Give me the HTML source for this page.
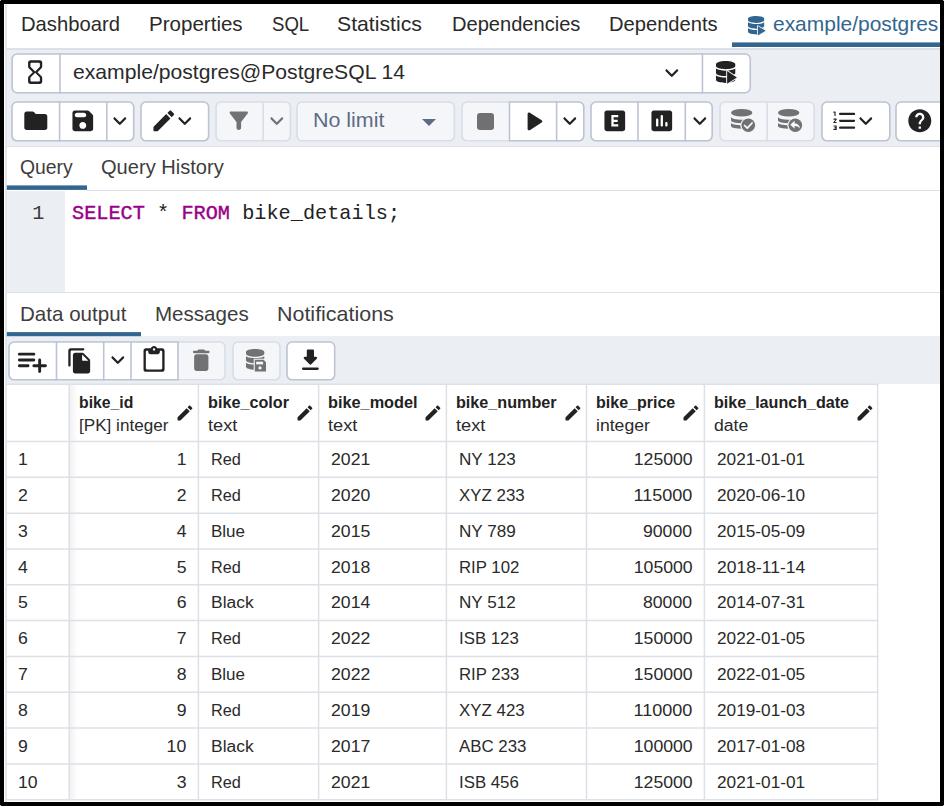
<!DOCTYPE html>
<html><head><meta charset="utf-8"><title>pgAdmin Query Tool</title>
<style>
*{box-sizing:border-box;margin:0;padding:0}
html,body{width:944px;height:806px;overflow:hidden;background:#000}
body{font-family:"Liberation Sans",sans-serif;color:#222;position:relative}
#app{position:absolute;left:4px;top:4px;width:936px;height:798px;background:#fff;overflow:hidden}
#app *{position:absolute}
.gray{background:#ebeef3}
.ln{background:#dde0e6}
.pri{background:#326690}
.tab{font-size:20.3px;line-height:24px;white-space:pre;color:#2a2a2a}
.btn{background:#fff;border:1.5px solid #c3cad8}
.btn.dis{background:#f4f6f9;border-color:#dbe0e8}
.dv{background:#c3cad8}
svg{overflow:visible}
.cell{font-size:17.3px;line-height:20px;white-space:pre;color:#2a2a2a}
.num{font-size:17.3px;line-height:20px;white-space:pre;color:#2a2a2a;text-align:right}
.hb{font-size:17px;font-weight:700;line-height:20px;white-space:pre;color:#222}
.ht{font-size:17.3px;line-height:20px;white-space:pre;color:#2a2a2a}
.code{font-family:"Liberation Mono",monospace;font-size:20.25px;line-height:24px;white-space:pre;color:#222}
.kw{position:static !important;color:#990088;-webkit-text-stroke:0.4px #990088}
.lnl{background:#e2e5ea}
.cd{position:absolute;width:1px;height:1px;background:#bbb}
</style></head><body>
<div class="cd" style="left:0;top:0"></div><div class="cd" style="right:0;top:0"></div><div class="cd" style="left:0;bottom:0"></div><div class="cd" style="right:0;bottom:0"></div>
<div id="app">
<div class="lnl" style="left:1.3px;top:0px;width:1.5px;height:798px;"></div>
<span class="tab" style="left:17px;top:8px;transform:scaleX(0.9974);transform-origin:0 0;">Dashboard</span>
<span class="tab" style="left:144.6px;top:8px;transform:scaleX(1.0131);transform-origin:0 0;">Properties</span>
<span class="tab" style="left:267.6px;top:8px;transform:scaleX(0.9157);transform-origin:0 0;">SQL</span>
<span class="tab" style="left:332.6px;top:8px;transform:scaleX(1.0467);transform-origin:0 0;">Statistics</span>
<span class="tab" style="left:448px;top:8px;transform:scaleX(0.9903);transform-origin:0 0;">Dependencies</span>
<span class="tab" style="left:604.8px;top:8px;transform:scaleX(0.9930);transform-origin:0 0;">Dependents</span>
<span class="tab" style="left:768.6px;top:8.3px;transform:scaleX(1.0329);transform-origin:0 0;color:#326690">example/postgres</span>
<div class="ln" style="left:2.8px;top:44px;width:933.2px;height:2px;"></div>
<div class="gray" style="left:2.8px;top:46px;width:933.2px;height:96px;"></div>
<div class="ln" style="left:2.8px;top:141.5px;width:933.2px;height:1.5px;"></div>
<svg style="left:5.85px;top:47.6px" width="742.35" height="42.7" viewBox="0 0 742.35 42.7"><path d="M7 2H49.85V40.7H7A5 5 0 0 1 2 35.7V7A5 5 0 0 1 7 2z" fill="#fff"/><path d="M49.85 2H692.55V40.7H49.85V2z" fill="#fff"/><path d="M692.55 2H735.35A5 5 0 0 1 740.35 7V35.7A5 5 0 0 1 735.35 40.7H692.55V2z" fill="#fff"/><path d="M7 2H50.65M50.65 40.7H7A5 5 0 0 1 2 35.7V7A5 5 0 0 1 7 2" fill="none" stroke="#bcc3d3" stroke-width="1.6"/><path d="M49.05 2H693.35M693.35 40.7H49.05" fill="none" stroke="#bcc3d3" stroke-width="1.6"/><path d="M691.75 2H735.35A5 5 0 0 1 740.35 7V35.7A5 5 0 0 1 735.35 40.7H691.75" fill="none" stroke="#bcc3d3" stroke-width="1.6"/><path d="M49.85 2.8V39.9" stroke="#bcc3d3" stroke-width="1.6" fill="none"/><path d="M692.55 2.8V39.9" stroke="#bcc3d3" stroke-width="1.6" fill="none"/></svg>
<svg style="left:17.34px;top:54.44px;opacity:1" width="28.32" height="28.32" viewBox="0 0 24 24"><path fill="#222" d="M8 2c-1.100 0-2 .9-2 2v3.170c0 .530.210 1.040.590 1.420L10 12l-3.420 3.420c-.370.380-.580.890-.580 1.420V20c0 1.100.9 2 2 2h8c1.100 0 2-.9 2-2v-3.160c0-.530-.210-1.040-.580-1.410L14 12l3.410-3.400c.380-.380.590-.890.590-1.420V4c0-1.100-.9-2-2-2H8zm8 14.500V19c0 .55-.45 1-1 1H9c-.55 0-1-.45-1-1v-2.500l4-4 4 4zm-4-5l-4-4V5c0-.55.45-1 1-1h6c.55 0 1 .45 1 1v2.500l-4 4z"/></svg>
<span class="tab" style="left:68.6px;top:56px;transform:scaleX(1.0064);transform-origin:0 0;font-size:21px">example/postgres@PostgreSQL 14</span>
<svg style="left:654.2px;top:54.7px;opacity:1" width="27.6" height="27.6" viewBox="0 0 24 24"><path fill="#222" d="M8.12 9.29 12 13.17l3.88-3.88c.39-.39 1.02-.39 1.41 0 .39.39.39 1.02 0 1.41l-4.59 4.59c-.39.39-1.02.39-1.41 0L6.7 10.7c-.39-.39-.39-1.02 0-1.41.39-.38 1.03-.39 1.42 0z"/></svg>
<svg style="left:6px;top:96.1px" width="125.7" height="42.8" viewBox="0 0 125.7 42.8"><path d="M7 2H49.6V40.8H7A5 5 0 0 1 2 35.8V7A5 5 0 0 1 7 2z" fill="#fff"/><path d="M49.6 2H96.8V40.8H49.6V2z" fill="#fff"/><path d="M96.8 2H118.7A5 5 0 0 1 123.7 7V35.8A5 5 0 0 1 118.7 40.8H96.8V2z" fill="#fff"/><path d="M7 2H50.4M50.4 40.8H7A5 5 0 0 1 2 35.8V7A5 5 0 0 1 7 2" fill="none" stroke="#bcc3d3" stroke-width="1.6"/><path d="M48.8 2H97.6M97.6 40.8H48.8" fill="none" stroke="#bcc3d3" stroke-width="1.6"/><path d="M96 2H118.7A5 5 0 0 1 123.7 7V35.8A5 5 0 0 1 118.7 40.8H96" fill="none" stroke="#bcc3d3" stroke-width="1.6"/><path d="M49.6 2.8V40" stroke="#bcc3d3" stroke-width="1.6" fill="none"/><path d="M96.8 2.8V40" stroke="#bcc3d3" stroke-width="1.6" fill="none"/></svg>
<svg style="left:17.7px;top:102.8px;opacity:1" width="27.6" height="27.6" viewBox="0 0 24 24"><path fill="#222" d="M10.59 4.59C10.21 4.21 9.7 4 9.17 4H4c-1.1 0-1.99.9-1.99 2L2 18c0 1.1.9 2 2 2h16c1.1 0 2-.9 2-2V8c0-1.1-.9-2-2-2h-8l-1.41-1.41z"/></svg>
<svg style="left:65.2px;top:103px;opacity:1" width="27.6" height="27.6" viewBox="0 0 24 24"><path fill="#222" d="M17.59 3.59c-.38-.38-.89-.59-1.42-.59H5c-1.11 0-2 .9-2 2v14c0 1.1.9 2 2 2h14c1.1 0 2-.9 2-2V7.83c0-.53-.21-1.04-.59-1.41l-2.82-2.83zM12 19c-1.66 0-3-1.34-3-3s1.34-3 3-3 3 1.34 3 3-1.34 3-3 3zm1-10H7c-1.1 0-2-.9-2-2s.9-2 2-2h6c1.1 0 2 .9 2 2s-.9 2-2 2z"/></svg>
<svg style="left:102.4px;top:102.68px;opacity:1" width="27.6" height="27.6" viewBox="0 0 24 24"><path fill="#222" d="M8.12 9.29 12 13.17l3.88-3.88c.39-.39 1.02-.39 1.41 0 .39.39.39 1.02 0 1.41l-4.59 4.59c-.39.39-1.02.39-1.41 0L6.7 10.7c-.39-.39-.39-1.02 0-1.41.39-.38 1.03-.39 1.42 0z"/></svg>
<svg style="left:134.8px;top:96.1px" width="71.6" height="42.8" viewBox="0 0 71.6 42.8"><path d="M7 2H64.6A5 5 0 0 1 69.6 7V35.8A5 5 0 0 1 64.6 40.8H7A5 5 0 0 1 2 35.8V7A5 5 0 0 1 7 2z" fill="#fff"/><path d="M7 2H64.6A5 5 0 0 1 69.6 7V35.8A5 5 0 0 1 64.6 40.8H7A5 5 0 0 1 2 35.8V7A5 5 0 0 1 7 2" fill="none" stroke="#bcc3d3" stroke-width="1.6"/></svg>
<svg style="left:146.4px;top:103.1px;opacity:1" width="27.6" height="27.6" viewBox="0 0 24 24"><path fill="#222" d="M3 17.46v3.04c0 .28.22.5.5.5h3.04c.13 0 .26-.05.35-.15L17.81 9.94l-3.75-3.75L3.15 17.1c-.1.1-.15.22-.15.36zM20.71 7.04c.39-.39.39-1.02 0-1.41l-2.34-2.34c-.39-.39-1.02-.39-1.41 0l-1.83 1.83 3.75 3.75 1.83-1.83z"/></svg>
<svg style="left:167px;top:102.68px;opacity:1" width="27.6" height="27.6" viewBox="0 0 24 24"><path fill="#222" d="M8.12 9.29 12 13.17l3.88-3.88c.39-.39 1.02-.39 1.41 0 .39.39.39 1.02 0 1.41l-4.59 4.59c-.39.39-1.02.39-1.41 0L6.7 10.7c-.39-.39-.39-1.02 0-1.41.39-.38 1.03-.39 1.42 0z"/></svg>
<svg style="left:209.5px;top:96.1px" width="78.4" height="42.8" viewBox="0 0 78.4 42.8"><path d="M7 2H49.1V40.8H7A5 5 0 0 1 2 35.8V7A5 5 0 0 1 7 2z" fill="#f5f6f9"/><path d="M49.1 2H71.4A5 5 0 0 1 76.4 7V35.8A5 5 0 0 1 71.4 40.8H49.1V2z" fill="#f5f6f9"/><path d="M7 2H49.9M49.9 40.8H7A5 5 0 0 1 2 35.8V7A5 5 0 0 1 7 2" fill="none" stroke="#d9dde7" stroke-width="1.6"/><path d="M48.3 2H71.4A5 5 0 0 1 76.4 7V35.8A5 5 0 0 1 71.4 40.8H48.3" fill="none" stroke="#d9dde7" stroke-width="1.6"/><path d="M49.1 2.8V40" stroke="#d9dde7" stroke-width="1.6" fill="none"/></svg>
<svg style="left:221.4px;top:102.6px;opacity:0.62" width="27.6" height="27.6" viewBox="0 0 24 24"><path fill="#222" d="M4.25 5.61C6.57 8.59 10 13 10 13v5c0 1.1.9 2 2 2s2-.9 2-2v-5s3.43-4.41 5.75-7.39c.51-.66.04-1.61-.8-1.61H5.04c-.83 0-1.3.95-.79 1.61z"/></svg>
<svg style="left:258.6px;top:102.68px;opacity:0.62" width="27.6" height="27.6" viewBox="0 0 24 24"><path fill="#222" d="M8.12 9.29 12 13.17l3.88-3.88c.39-.39 1.02-.39 1.41 0 .39.39.39 1.02 0 1.41l-4.59 4.59c-.39.39-1.02.39-1.41 0L6.7 10.7c-.39-.39-.39-1.02 0-1.41.39-.38 1.03-.39 1.42 0z"/></svg>
<svg style="left:291.3px;top:96.1px" width="161.3" height="42.8" viewBox="0 0 161.3 42.8"><path d="M7 2H154.3A5 5 0 0 1 159.3 7V35.8A5 5 0 0 1 154.3 40.8H7A5 5 0 0 1 2 35.8V7A5 5 0 0 1 7 2z" fill="#f5f6f9"/><path d="M7 2H154.3A5 5 0 0 1 159.3 7V35.8A5 5 0 0 1 154.3 40.8H7A5 5 0 0 1 2 35.8V7A5 5 0 0 1 7 2" fill="none" stroke="#d9dde7" stroke-width="1.6"/></svg>
<span class="tab" style="left:309.4px;top:104.2px;transform:scaleX(1.0566);transform-origin:0 0;color:#5e6b85">No limit</span>
<svg style="left:418px;top:114.5px" width="14" height="7" viewBox="0 0 14 7"><path d="M0 0h14l-7 7z" fill="#5e6b85"/></svg>
<svg style="left:456.2px;top:96.1px" width="125.8" height="42.8" viewBox="0 0 125.8 42.8"><path d="M7 2H49.5V40.8H7A5 5 0 0 1 2 35.8V7A5 5 0 0 1 7 2z" fill="#f5f6f9"/><path d="M49.5 2H96.6V40.8H49.5V2z" fill="#fff"/><path d="M96.6 2H118.8A5 5 0 0 1 123.8 7V35.8A5 5 0 0 1 118.8 40.8H96.6V2z" fill="#fff"/><path d="M7 2H50.3M50.3 40.8H7A5 5 0 0 1 2 35.8V7A5 5 0 0 1 7 2" fill="none" stroke="#d9dde7" stroke-width="1.6"/><path d="M48.7 2H97.4M97.4 40.8H48.7" fill="none" stroke="#bcc3d3" stroke-width="1.6"/><path d="M95.8 2H118.8A5 5 0 0 1 123.8 7V35.8A5 5 0 0 1 118.8 40.8H95.8" fill="none" stroke="#bcc3d3" stroke-width="1.6"/><path d="M49.5 2.8V40" stroke="#bcc3d3" stroke-width="1.6" fill="none"/><path d="M96.6 2.8V40" stroke="#bcc3d3" stroke-width="1.6" fill="none"/></svg>
<div class="" style="left:473px;top:108.8px;width:17.2px;height:17.2px;background:#707072;border-radius:3px"></div>
<svg style="left:511.58px;top:100px;opacity:1" width="34.8" height="34.8" viewBox="0 0 24 24"><path fill="#222" d="M8 6.82v10.36c0 .79.87 1.27 1.54.84l8.14-5.18c.62-.39.62-1.29 0-1.69L9.54 5.98C8.87 5.55 8 6.03 8 6.82z"/></svg>
<svg style="left:552.4px;top:102.68px;opacity:1" width="27.6" height="27.6" viewBox="0 0 24 24"><path fill="#222" d="M8.12 9.29 12 13.17l3.88-3.88c.39-.39 1.02-.39 1.41 0 .39.39.39 1.02 0 1.41l-4.59 4.59c-.39.39-1.02.39-1.41 0L6.7 10.7c-.39-.39-.39-1.02 0-1.41.39-.38 1.03-.39 1.42 0z"/></svg>
<svg style="left:585.3px;top:96.1px" width="125.2" height="42.8" viewBox="0 0 125.2 42.8"><path d="M7 2H49V40.8H7A5 5 0 0 1 2 35.8V7A5 5 0 0 1 7 2z" fill="#fff"/><path d="M49 2H96.3V40.8H49V2z" fill="#fff"/><path d="M96.3 2H118.2A5 5 0 0 1 123.2 7V35.8A5 5 0 0 1 118.2 40.8H96.3V2z" fill="#fff"/><path d="M7 2H49.8M49.8 40.8H7A5 5 0 0 1 2 35.8V7A5 5 0 0 1 7 2" fill="none" stroke="#bcc3d3" stroke-width="1.6"/><path d="M48.2 2H97.1M97.1 40.8H48.2" fill="none" stroke="#bcc3d3" stroke-width="1.6"/><path d="M95.5 2H118.2A5 5 0 0 1 123.2 7V35.8A5 5 0 0 1 118.2 40.8H95.5" fill="none" stroke="#bcc3d3" stroke-width="1.6"/><path d="M49 2.8V40" stroke="#bcc3d3" stroke-width="1.6" fill="none"/><path d="M96.3 2.8V40" stroke="#bcc3d3" stroke-width="1.6" fill="none"/></svg>
<svg style="left:596.8px;top:103.4px;opacity:1" width="27.6" height="27.6" viewBox="0 0 24 24"><path fill="#222" d="M19 3H5c-1.1 0-2 .9-2 2v14c0 1.1.9 2 2 2h14c1.1 0 2-.9 2-2V5c0-1.1-.9-2-2-2zM15 9h-4v2h3.500v2H11v2h4v2H9V7h6v2z"/></svg>
<svg style="left:644.2px;top:103.4px;opacity:1" width="27.6" height="27.6" viewBox="0 0 24 24"><path fill="#222" d="M19 3H5c-1.1 0-2 .9-2 2v14c0 1.1.9 2 2 2h14c1.1 0 2-.9 2-2V5c0-1.1-.9-2-2-2zM8 17c-.55 0-1-.45-1-1v-5c0-.55.45-1 1-1s1 .45 1 1v5c0 .55-.45 1-1 1zm4 0c-.55 0-1-.45-1-1V8c0-.55.45-1 1-1s1 .45 1 1v8c0 .55-.45 1-1 1zm4 0c-.55 0-1-.45-1-1v-2c0-.55.45-1 1-1s1 .45 1 1v2c0 .55-.45 1-1 1z"/></svg>
<svg style="left:681.7px;top:102.68px;opacity:1" width="27.6" height="27.6" viewBox="0 0 24 24"><path fill="#222" d="M8.12 9.29 12 13.17l3.88-3.88c.39-.39 1.02-.39 1.41 0 .39.39.39 1.02 0 1.41l-4.59 4.59c-.39.39-1.02.39-1.41 0L6.7 10.7c-.39-.39-.39-1.02 0-1.41.39-.38 1.03-.39 1.42 0z"/></svg>
<svg style="left:714.2px;top:96.1px" width="98.2" height="42.8" viewBox="0 0 98.2 42.8"><path d="M7 2H49.1V40.8H7A5 5 0 0 1 2 35.8V7A5 5 0 0 1 7 2z" fill="#f5f6f9"/><path d="M49.1 2H91.2A5 5 0 0 1 96.2 7V35.8A5 5 0 0 1 91.2 40.8H49.1V2z" fill="#f5f6f9"/><path d="M7 2H49.9M49.9 40.8H7A5 5 0 0 1 2 35.8V7A5 5 0 0 1 7 2" fill="none" stroke="#d9dde7" stroke-width="1.6"/><path d="M48.3 2H91.2A5 5 0 0 1 96.2 7V35.8A5 5 0 0 1 91.2 40.8H48.3" fill="none" stroke="#d9dde7" stroke-width="1.6"/><path d="M49.1 2.8V40" stroke="#d9dde7" stroke-width="1.6" fill="none"/></svg>
<svg style="left:815.5px;top:96.1px" width="71.8" height="42.8" viewBox="0 0 71.8 42.8"><path d="M7 2H64.8A5 5 0 0 1 69.8 7V35.8A5 5 0 0 1 64.8 40.8H7A5 5 0 0 1 2 35.8V7A5 5 0 0 1 7 2z" fill="#fff"/><path d="M7 2H64.8A5 5 0 0 1 69.8 7V35.8A5 5 0 0 1 64.8 40.8H7A5 5 0 0 1 2 35.8V7A5 5 0 0 1 7 2" fill="none" stroke="#bcc3d3" stroke-width="1.6"/></svg>
<svg style="left:827.48px;top:102.8px;opacity:1" width="27.6" height="27.6" viewBox="0 0 24 24"><path fill="#222" d="M8 7h12c.55 0 1-.45 1-1s-.45-1-1-1H8c-.55 0-1 .45-1 1s.45 1 1 1zm12 10H8c-.55 0-1 .45-1 1s.45 1 1 1h12c.55 0 1-.45 1-1s-.45-1-1-1zm0-6H8c-.55 0-1 .45-1 1s.45 1 1 1h12c.55 0 1-.45 1-1s-.45-1-1-1zM4.500 16h-2c-.28 0-.5.22-.5.5s.22.5.5.5H4v.5h-.5c-.28 0-.5.22-.5.5s.22.5.5.5H4v.5H2.500c-.28 0-.5.22-.5.5s.22.5.5.5h2c.28 0 .5-.22.5-.5v-3c0-.28-.22-.5-.5-.5zm-2-11H3v2.500c0 .28.22.5.5.5s.5-.22.5-.5v-3c0-.28-.22-.5-.5-.5h-1c-.28 0-.5.22-.5.5s.22.5.5.5zm2 5h-2c-.28 0-.5.22-.5.5s.22.5.5.5h1.300l-1.680 1.960c-.08.09-.12.21-.12.32v.22c0 .28.22.5.5.5h2c.28 0 .5-.22.5-.5s-.22-.5-.5-.5H3.200l1.680-1.960c.08-.09.12-.21.12-.32v-.22c0-.28-.22-.5-.5-.5z"/></svg>
<svg style="left:848.1px;top:102.68px;opacity:1" width="27.6" height="27.6" viewBox="0 0 24 24"><path fill="#222" d="M8.12 9.29 12 13.17l3.88-3.88c.39-.39 1.02-.39 1.41 0 .39.39.39 1.02 0 1.41l-4.59 4.59c-.39.39-1.02.39-1.41 0L6.7 10.7c-.39-.39-.39-1.02 0-1.41.39-.38 1.03-.39 1.42 0z"/></svg>
<svg style="left:890.4px;top:96.1px" width="57.6" height="42.8" viewBox="0 0 57.6 42.8"><path d="M7 2H50.6A5 5 0 0 1 55.6 7V35.8A5 5 0 0 1 50.6 40.8H7A5 5 0 0 1 2 35.8V7A5 5 0 0 1 7 2z" fill="#fff"/><path d="M7 2H50.6A5 5 0 0 1 55.6 7V35.8A5 5 0 0 1 50.6 40.8H7A5 5 0 0 1 2 35.8V7A5 5 0 0 1 7 2" fill="none" stroke="#bcc3d3" stroke-width="1.6"/></svg>
<svg style="left:902.2px;top:102.7px;opacity:1" width="27.6" height="27.6" viewBox="0 0 24 24"><path fill="#222" d="M12 2C6.480 2 2 6.480 2 12s4.480 10 10 10 10-4.480 10-10S17.520 2 12 2zm1 17h-2v-2h2v2zm2.070-7.750l-.9.920C13.450 12.900 13 13.500 13 15h-2v-.5c0-1.100.450-2.100 1.170-2.830l1.240-1.260c.370-.360.590-.860.590-1.410 0-1.100-.9-2-2-2s-2 .9-2 2H8c0-2.210 1.790-4 4-4s4 1.790 4 4c0 .880-.360 1.680-.930 2.250z"/></svg>
<span class="tab" style="left:15.8px;top:151.3px;transform:scaleX(0.9545);transform-origin:0 0;color:#3d3d3d">Query</span>
<span class="tab" style="left:97.2px;top:151.3px;transform:scaleX(0.9901);transform-origin:0 0;color:#3d3d3d">Query History</span>
<div class="ln" style="left:83px;top:185.6px;width:853px;height:1.4px;"></div>
<div class="gray" style="left:2.8px;top:187px;width:58.5px;height:100.6px;"></div>
<span class="code" style="left:28.2px;top:198.1px;color:#3a3a3a">1</span>
<span class="code" style="left:68px;top:198.1px"><span class="kw">SELECT</span> * <span class="kw">FROM</span> bike_details;</span>
<div class="ln" style="left:2.8px;top:287.6px;width:933.2px;height:1.5px;"></div>
<span class="tab" style="left:15.6px;top:297.8px;transform:scaleX(1.0141);transform-origin:0 0;color:#3d3d3d">Data output</span>
<span class="tab" style="left:150.8px;top:297.8px;transform:scaleX(1.0133);transform-origin:0 0;color:#3d3d3d">Messages</span>
<span class="tab" style="left:273.4px;top:297.8px;transform:scaleX(1.0573);transform-origin:0 0;color:#3d3d3d">Notifications</span>
<div class="gray" style="left:2.8px;top:332.2px;width:933.2px;height:47.8px;"></div>
<svg style="left:3px;top:336px" width="220" height="41.8" viewBox="0 0 220 41.8"><path d="M7 2H49.5V39.8H7A5 5 0 0 1 2 34.8V7A5 5 0 0 1 7 2z" fill="#fff"/><path d="M49.5 2H96.7V39.8H49.5V2z" fill="#fff"/><path d="M96.7 2H124V39.8H96.7V2z" fill="#fff"/><path d="M124 2H171V39.8H124V2z" fill="#fff"/><path d="M171 2H213A5 5 0 0 1 218 7V34.8A5 5 0 0 1 213 39.8H171V2z" fill="#f5f6f9"/><path d="M170.2 2H213A5 5 0 0 1 218 7V34.8A5 5 0 0 1 213 39.8H170.2" fill="none" stroke="#d9dde7" stroke-width="1.6"/><path d="M7 2H50.3M50.3 39.8H7A5 5 0 0 1 2 34.8V7A5 5 0 0 1 7 2" fill="none" stroke="#bcc3d3" stroke-width="1.6"/><path d="M48.7 2H97.5M97.5 39.8H48.7" fill="none" stroke="#bcc3d3" stroke-width="1.6"/><path d="M95.9 2H124.8M124.8 39.8H95.9" fill="none" stroke="#bcc3d3" stroke-width="1.6"/><path d="M123.2 2H171.8M171.8 39.8H123.2" fill="none" stroke="#bcc3d3" stroke-width="1.6"/><path d="M49.5 2.8V39" stroke="#bcc3d3" stroke-width="1.6" fill="none"/><path d="M96.7 2.8V39" stroke="#bcc3d3" stroke-width="1.6" fill="none"/><path d="M124 2.8V39" stroke="#bcc3d3" stroke-width="1.6" fill="none"/><path d="M171 2.8V39" stroke="#bcc3d3" stroke-width="1.6" fill="none"/></svg>
<svg style="left:11.2px;top:339.5px;opacity:1" width="34.8" height="34.8" viewBox="0 0 24 24"><path fill="#222" d="M13 10H3c-.55 0-1 .45-1 1s.45 1 1 1h10c.55 0 1-.45 1-1s-.45-1-1-1zm0-4H3c-.55 0-1 .45-1 1s.45 1 1 1h10c.55 0 1-.45 1-1s-.45-1-1-1zm5 8v-3c0-.55-.45-1-1-1s-1 .45-1 1v3h-3c-.55 0-1 .45-1 1s.45 1 1 1h3v3c0 .55.45 1 1 1s1-.45 1-1v-3h3c.55 0 1-.45 1-1s-.45-1-1-1h-3zM3 16h6c.55 0 1-.45 1-1s-.45-1-1-1H3c-.55 0-1 .45-1 1s.45 1 1 1z"/></svg>
<svg style="left:62.2px;top:342.9px;opacity:1" width="27.6" height="27.6" viewBox="0 0 24 24"><path fill="#222" d="M15 1H4c-1.100 0-2 .9-2 2v13c0 .55.45 1 1 1s1-.45 1-1V4c0-.55.45-1 1-1h10c.55 0 1-.45 1-1s-.45-1-1-1zm.590 4.590l4.830 4.830c.370.370.580.880.580 1.410V21c0 1.100-.9 2-2 2H7.990C6.890 23 6 22.100 6 21l.01-14c0-1.100.89-2 1.990-2h6.170c.530 0 1.040.210 1.420.590zM15 12h4.500L14 6.500V11c0 .55.45 1 1 1z"/></svg>
<svg style="left:99.5px;top:342.48px;opacity:1" width="27.6" height="27.6" viewBox="0 0 24 24"><path fill="#222" d="M8.12 9.29 12 13.17l3.88-3.88c.39-.39 1.02-.39 1.41 0 .39.39.39 1.02 0 1.41l-4.59 4.59c-.39.39-1.02.39-1.41 0L6.7 10.7c-.39-.39-.39-1.02 0-1.41.39-.38 1.03-.39 1.42 0z"/></svg>
<svg style="left:136.3px;top:342.4px;opacity:1" width="28.08" height="28.08" viewBox="0 0 24 24"><path fill="#222" d="M19 2h-4.180C14.400.840 13.300 0 12 0S9.600.840 9.180 2H5c-1.100 0-2 .9-2 2v16c0 1.100.9 2 2 2h14c1.100 0 2-.9 2-2V4c0-1.100-.9-2-2-2zm-7 0c.55 0 1 .45 1 1s-.45 1-1 1-1-.45-1-1 .45-1 1-1zm6 18H6c-.55 0-1-.45-1-1V5c0-.55.45-1 1-1h1v1c0 1.100.9 2 2 2h6c1.100 0 2-.9 2-2V4h1c.55 0 1 .45 1 1v14c0 .55-.45 1-1 1z"/></svg>
<svg style="left:183.3px;top:341.7px;opacity:0.62" width="28.56" height="28.56" viewBox="0 0 24 24"><path fill="#222" d="M6 19c0 1.100.9 2 2 2h8c1.100 0 2-.9 2-2V9c0-1.100-.9-2-2-2H8c-1.100 0-2 .9-2 2v10zM18 4h-2.500l-.710-.710c-.180-.180-.440-.290-.7-.290H9.910c-.260 0-.520.110-.7.290L8.500 4H6c-.55 0-1 .45-1 1s.45 1 1 1h12c.55 0 1-.45 1-1s-.45-1-1-1z"/></svg>
<svg style="left:226.6px;top:336px" width="51" height="41.8" viewBox="0 0 51 41.8"><path d="M7 2H44A5 5 0 0 1 49 7V34.8A5 5 0 0 1 44 39.8H7A5 5 0 0 1 2 34.8V7A5 5 0 0 1 7 2z" fill="#f5f6f9"/><path d="M7 2H44A5 5 0 0 1 49 7V34.8A5 5 0 0 1 44 39.8H7A5 5 0 0 1 2 34.8V7A5 5 0 0 1 7 2" fill="none" stroke="#d9dde7" stroke-width="1.6"/></svg>
<svg style="left:280.7px;top:336px" width="51.7" height="41.8" viewBox="0 0 51.7 41.8"><path d="M7 2H44.7A5 5 0 0 1 49.7 7V34.8A5 5 0 0 1 44.7 39.8H7A5 5 0 0 1 2 34.8V7A5 5 0 0 1 7 2z" fill="#fff"/><path d="M7 2H44.7A5 5 0 0 1 49.7 7V34.8A5 5 0 0 1 44.7 39.8H7A5 5 0 0 1 2 34.8V7A5 5 0 0 1 7 2" fill="none" stroke="#bcc3d3" stroke-width="1.6"/></svg>
<svg style="left:292.3px;top:342.2px;opacity:1" width="28.8" height="28.8" viewBox="0 0 24 24"><path fill="#222" d="M16.590 9H15V4c0-.55-.45-1-1-1h-4c-.55 0-1 .45-1 1v5H7.410c-.890 0-1.340 1.080-.710 1.710l4.590 4.590c.390.390 1.020.390 1.410 0l4.590-4.590c.630-.630.190-1.710-.7-1.710zM5 19c0 .55.45 1 1 1h12c.55 0 1-.45 1-1s-.45-1-1-1H6c-.55 0-1 .45-1 1z"/></svg>
<div class="" style="left:66px;top:380.5px;width:8px;height:415px;background:linear-gradient(90deg,rgba(0,0,20,0.05),rgba(0,0,20,0))"></div>
<svg style="left:0;top:0" width="936" height="798" viewBox="0 0 936 798"><path d="M2.8 380.3H874.35" stroke="#dde0e6" stroke-width="1.5"/><path d="M2.8 437.5H874.35" stroke="#dde0e6" stroke-width="1.5"/><path d="M2.8 473.32H874.35" stroke="#dde0e6" stroke-width="1.5"/><path d="M2.8 509.14H874.35" stroke="#dde0e6" stroke-width="1.5"/><path d="M2.8 544.96H874.35" stroke="#dde0e6" stroke-width="1.5"/><path d="M2.8 580.78H874.35" stroke="#dde0e6" stroke-width="1.5"/><path d="M2.8 616.6H874.35" stroke="#dde0e6" stroke-width="1.5"/><path d="M2.8 652.42H874.35" stroke="#dde0e6" stroke-width="1.5"/><path d="M2.8 688.24H874.35" stroke="#dde0e6" stroke-width="1.5"/><path d="M2.8 724.06H874.35" stroke="#dde0e6" stroke-width="1.5"/><path d="M2.8 759.88H874.35" stroke="#dde0e6" stroke-width="1.5"/><path d="M2.8 795.7H874.35" stroke="#dde0e6" stroke-width="1.5"/><path d="M65.2 380V796.45" stroke="#dde0e6" stroke-width="1.5"/><path d="M194.4 380V796.45" stroke="#dde0e6" stroke-width="1.5"/><path d="M314.6 380V796.45" stroke="#dde0e6" stroke-width="1.5"/><path d="M442.4 380V796.45" stroke="#dde0e6" stroke-width="1.5"/><path d="M582.5 380V796.45" stroke="#dde0e6" stroke-width="1.5"/><path d="M700.4 380V796.45" stroke="#dde0e6" stroke-width="1.5"/><path d="M873.6 380V796.45" stroke="#dde0e6" stroke-width="1.5"/><rect x="728" y="38.4" width="208" height="4.6" fill="#326690"/><rect x="2.8" y="181.4" width="80.2" height="4.5" fill="#326690"/><rect x="2.8" y="328.1" width="134.2" height="4.1" fill="#326690"/></svg>
<span class="hb" style="left:75px;top:389.4px;transform:scaleX(0.9270);transform-origin:0 0;">bike_id</span>
<span class="ht" style="left:75px;top:411px;transform:scaleX(0.9904);transform-origin:0 0;">[PK] integer</span>
<svg style="left:170.84px;top:398.94px;opacity:1" width="19.92" height="19.92" viewBox="0 0 24 24"><path fill="#222" d="M3 17.46v3.04c0 .28.22.5.5.5h3.04c.13 0 .26-.05.35-.15L17.81 9.94l-3.75-3.75L3.15 17.1c-.1.1-.15.22-.15.36zM20.71 7.04c.39-.39.39-1.02 0-1.41l-2.34-2.34c-.39-.39-1.02-.39-1.41 0l-1.83 1.83 3.75 3.75 1.83-1.83z"/></svg>
<span class="hb" style="left:204.2px;top:389.4px;transform:scaleX(0.9526);transform-origin:0 0;">bike_color</span>
<span class="ht" style="left:204.2px;top:411px;transform:scaleX(1.0535);transform-origin:0 0;">text</span>
<svg style="left:291.04px;top:398.94px;opacity:1" width="19.92" height="19.92" viewBox="0 0 24 24"><path fill="#222" d="M3 17.46v3.04c0 .28.22.5.5.5h3.04c.13 0 .26-.05.35-.15L17.81 9.94l-3.75-3.75L3.15 17.1c-.1.1-.15.22-.15.36zM20.71 7.04c.39-.39.39-1.02 0-1.41l-2.34-2.34c-.39-.39-1.02-.39-1.41 0l-1.83 1.83 3.75 3.75 1.83-1.83z"/></svg>
<span class="hb" style="left:324.4px;top:389.4px;transform:scaleX(0.9579);transform-origin:0 0;">bike_model</span>
<span class="ht" style="left:324.4px;top:411px;transform:scaleX(1.0535);transform-origin:0 0;">text</span>
<svg style="left:418.84px;top:398.94px;opacity:1" width="19.92" height="19.92" viewBox="0 0 24 24"><path fill="#222" d="M3 17.46v3.04c0 .28.22.5.5.5h3.04c.13 0 .26-.05.35-.15L17.81 9.94l-3.75-3.75L3.15 17.1c-.1.1-.15.22-.15.36zM20.71 7.04c.39-.39.39-1.02 0-1.41l-2.34-2.34c-.39-.39-1.02-.39-1.41 0l-1.83 1.83 3.75 3.75 1.83-1.83z"/></svg>
<span class="hb" style="left:452.2px;top:389.4px;transform:scaleX(0.9508);transform-origin:0 0;">bike_number</span>
<span class="ht" style="left:452.2px;top:411px;transform:scaleX(1.0535);transform-origin:0 0;">text</span>
<svg style="left:558.94px;top:398.94px;opacity:1" width="19.92" height="19.92" viewBox="0 0 24 24"><path fill="#222" d="M3 17.46v3.04c0 .28.22.5.5.5h3.04c.13 0 .26-.05.35-.15L17.81 9.94l-3.75-3.75L3.15 17.1c-.1.1-.15.22-.15.36zM20.71 7.04c.39-.39.39-1.02 0-1.41l-2.34-2.34c-.39-.39-1.02-.39-1.41 0l-1.83 1.83 3.75 3.75 1.83-1.83z"/></svg>
<span class="hb" style="left:592.3px;top:389.4px;transform:scaleX(0.9417);transform-origin:0 0;">bike_price</span>
<span class="ht" style="left:592.3px;top:411px;transform:scaleX(1.0190);transform-origin:0 0;">integer</span>
<svg style="left:676.84px;top:398.94px;opacity:1" width="19.92" height="19.92" viewBox="0 0 24 24"><path fill="#222" d="M3 17.46v3.04c0 .28.22.5.5.5h3.04c.13 0 .26-.05.35-.15L17.81 9.94l-3.75-3.75L3.15 17.1c-.1.1-.15.22-.15.36zM20.71 7.04c.39-.39.39-1.02 0-1.41l-2.34-2.34c-.39-.39-1.02-.39-1.41 0l-1.83 1.83 3.75 3.75 1.83-1.83z"/></svg>
<span class="hb" style="left:710.2px;top:389.4px;transform:scaleX(0.9463);transform-origin:0 0;">bike_launch_date</span>
<span class="ht" style="left:710.2px;top:411px;transform:scaleX(1.0209);transform-origin:0 0;">date</span>
<svg style="left:851.44px;top:398.94px;opacity:1" width="19.92" height="19.92" viewBox="0 0 24 24"><path fill="#222" d="M3 17.46v3.04c0 .28.22.5.5.5h3.04c.13 0 .26-.05.35-.15L17.81 9.94l-3.75-3.75L3.15 17.1c-.1.1-.15.22-.15.36zM20.71 7.04c.39-.39.39-1.02 0-1.41l-2.34-2.34c-.39-.39-1.02-.39-1.41 0l-1.83 1.83 3.75 3.75 1.83-1.83z"/></svg>
<span class="cell" style="left:13.6px;top:445.21px;transform:scaleX(1.0213);transform-origin:0 0;">1</span>
<span class="num" style="right:753.7px;top:445.21px;transform:scaleX(1.0213);transform-origin:100% 0;">1</span>
<span class="cell" style="left:206.8px;top:445.21px;transform:scaleX(0.9426);transform-origin:0 0;">Red</span>
<span class="cell" style="left:327px;top:445.21px;transform:scaleX(1.0213);transform-origin:0 0;">2021</span>
<span class="cell" style="left:454.8px;top:445.21px;transform:scaleX(0.9897);transform-origin:0 0;">NY 123</span>
<span class="num" style="right:247.7px;top:445.21px;transform:scaleX(1.0213);transform-origin:100% 0;">125000</span>
<span class="cell" style="left:712.8px;top:445.21px;transform:scaleX(0.9975);transform-origin:0 0;">2021-01-01</span>
<span class="cell" style="left:13.6px;top:481.03px;transform:scaleX(1.0213);transform-origin:0 0;">2</span>
<span class="num" style="right:753.7px;top:481.03px;transform:scaleX(1.0213);transform-origin:100% 0;">2</span>
<span class="cell" style="left:206.8px;top:481.03px;transform:scaleX(0.9426);transform-origin:0 0;">Red</span>
<span class="cell" style="left:327px;top:481.03px;transform:scaleX(1.0213);transform-origin:0 0;">2020</span>
<span class="cell" style="left:454.8px;top:481.03px;transform:scaleX(0.9770);transform-origin:0 0;">XYZ 233</span>
<span class="num" style="right:247.7px;top:481.03px;transform:scaleX(1.0446);transform-origin:100% 0;">115000</span>
<span class="cell" style="left:712.8px;top:481.03px;transform:scaleX(0.9975);transform-origin:0 0;">2020-06-10</span>
<span class="cell" style="left:13.6px;top:516.85px;transform:scaleX(1.0213);transform-origin:0 0;">3</span>
<span class="num" style="right:753.7px;top:516.85px;transform:scaleX(1.0213);transform-origin:100% 0;">4</span>
<span class="cell" style="left:206.8px;top:516.85px;transform:scaleX(0.9837);transform-origin:0 0;">Blue</span>
<span class="cell" style="left:327px;top:516.85px;transform:scaleX(1.0213);transform-origin:0 0;">2015</span>
<span class="cell" style="left:454.8px;top:516.85px;transform:scaleX(0.9897);transform-origin:0 0;">NY 789</span>
<span class="num" style="right:247.7px;top:516.85px;transform:scaleX(1.0213);transform-origin:100% 0;">90000</span>
<span class="cell" style="left:712.8px;top:516.85px;transform:scaleX(0.9975);transform-origin:0 0;">2015-05-09</span>
<span class="cell" style="left:13.6px;top:552.67px;transform:scaleX(1.0213);transform-origin:0 0;">4</span>
<span class="num" style="right:753.7px;top:552.67px;transform:scaleX(1.0213);transform-origin:100% 0;">5</span>
<span class="cell" style="left:206.8px;top:552.67px;transform:scaleX(0.9426);transform-origin:0 0;">Red</span>
<span class="cell" style="left:327px;top:552.67px;transform:scaleX(1.0213);transform-origin:0 0;">2018</span>
<span class="cell" style="left:454.8px;top:552.67px;transform:scaleX(0.9709);transform-origin:0 0;">RIP 102</span>
<span class="num" style="right:247.7px;top:552.67px;transform:scaleX(1.0213);transform-origin:100% 0;">105000</span>
<span class="cell" style="left:712.8px;top:552.67px;transform:scaleX(1.0121);transform-origin:0 0;">2018-11-14</span>
<span class="cell" style="left:13.6px;top:588.49px;transform:scaleX(1.0213);transform-origin:0 0;">5</span>
<span class="num" style="right:753.7px;top:588.49px;transform:scaleX(1.0213);transform-origin:100% 0;">6</span>
<span class="cell" style="left:206.8px;top:588.49px;transform:scaleX(1.0091);transform-origin:0 0;">Black</span>
<span class="cell" style="left:327px;top:588.49px;transform:scaleX(1.0213);transform-origin:0 0;">2014</span>
<span class="cell" style="left:454.8px;top:588.49px;transform:scaleX(0.9897);transform-origin:0 0;">NY 512</span>
<span class="num" style="right:247.7px;top:588.49px;transform:scaleX(1.0213);transform-origin:100% 0;">80000</span>
<span class="cell" style="left:712.8px;top:588.49px;transform:scaleX(0.9975);transform-origin:0 0;">2014-07-31</span>
<span class="cell" style="left:13.6px;top:624.31px;transform:scaleX(1.0213);transform-origin:0 0;">6</span>
<span class="num" style="right:753.7px;top:624.31px;transform:scaleX(1.0213);transform-origin:100% 0;">7</span>
<span class="cell" style="left:206.8px;top:624.31px;transform:scaleX(0.9426);transform-origin:0 0;">Red</span>
<span class="cell" style="left:327px;top:624.31px;transform:scaleX(1.0213);transform-origin:0 0;">2022</span>
<span class="cell" style="left:454.8px;top:624.31px;transform:scaleX(0.9723);transform-origin:0 0;">ISB 123</span>
<span class="num" style="right:247.7px;top:624.31px;transform:scaleX(1.0213);transform-origin:100% 0;">150000</span>
<span class="cell" style="left:712.8px;top:624.31px;transform:scaleX(0.9975);transform-origin:0 0;">2022-01-05</span>
<span class="cell" style="left:13.6px;top:660.13px;transform:scaleX(1.0213);transform-origin:0 0;">7</span>
<span class="num" style="right:753.7px;top:660.13px;transform:scaleX(1.0213);transform-origin:100% 0;">8</span>
<span class="cell" style="left:206.8px;top:660.13px;transform:scaleX(0.9837);transform-origin:0 0;">Blue</span>
<span class="cell" style="left:327px;top:660.13px;transform:scaleX(1.0213);transform-origin:0 0;">2022</span>
<span class="cell" style="left:454.8px;top:660.13px;transform:scaleX(0.9709);transform-origin:0 0;">RIP 233</span>
<span class="num" style="right:247.7px;top:660.13px;transform:scaleX(1.0213);transform-origin:100% 0;">150000</span>
<span class="cell" style="left:712.8px;top:660.13px;transform:scaleX(0.9975);transform-origin:0 0;">2022-01-05</span>
<span class="cell" style="left:13.6px;top:695.95px;transform:scaleX(1.0213);transform-origin:0 0;">8</span>
<span class="num" style="right:753.7px;top:695.95px;transform:scaleX(1.0213);transform-origin:100% 0;">9</span>
<span class="cell" style="left:206.8px;top:695.95px;transform:scaleX(0.9426);transform-origin:0 0;">Red</span>
<span class="cell" style="left:327px;top:695.95px;transform:scaleX(1.0213);transform-origin:0 0;">2019</span>
<span class="cell" style="left:454.8px;top:695.95px;transform:scaleX(0.9770);transform-origin:0 0;">XYZ 423</span>
<span class="num" style="right:247.7px;top:695.95px;transform:scaleX(1.0446);transform-origin:100% 0;">110000</span>
<span class="cell" style="left:712.8px;top:695.95px;transform:scaleX(0.9975);transform-origin:0 0;">2019-01-03</span>
<span class="cell" style="left:13.6px;top:731.77px;transform:scaleX(1.0213);transform-origin:0 0;">9</span>
<span class="num" style="right:753.7px;top:731.77px;transform:scaleX(1.0213);transform-origin:100% 0;">10</span>
<span class="cell" style="left:206.8px;top:731.77px;transform:scaleX(1.0091);transform-origin:0 0;">Black</span>
<span class="cell" style="left:327px;top:731.77px;transform:scaleX(1.0213);transform-origin:0 0;">2017</span>
<span class="cell" style="left:454.8px;top:731.77px;transform:scaleX(0.9750);transform-origin:0 0;">ABC 233</span>
<span class="num" style="right:247.7px;top:731.77px;transform:scaleX(1.0213);transform-origin:100% 0;">100000</span>
<span class="cell" style="left:712.8px;top:731.77px;transform:scaleX(0.9975);transform-origin:0 0;">2017-01-08</span>
<span class="cell" style="left:13.6px;top:767.59px;transform:scaleX(1.0213);transform-origin:0 0;">10</span>
<span class="num" style="right:753.7px;top:767.59px;transform:scaleX(1.0213);transform-origin:100% 0;">3</span>
<span class="cell" style="left:206.8px;top:767.59px;transform:scaleX(0.9426);transform-origin:0 0;">Red</span>
<span class="cell" style="left:327px;top:767.59px;transform:scaleX(1.0213);transform-origin:0 0;">2021</span>
<span class="cell" style="left:454.8px;top:767.59px;transform:scaleX(0.9723);transform-origin:0 0;">ISB 456</span>
<span class="num" style="right:247.7px;top:767.59px;transform:scaleX(1.0213);transform-origin:100% 0;">125000</span>
<span class="cell" style="left:712.8px;top:767.59px;transform:scaleX(0.9975);transform-origin:0 0;">2021-01-01</span>
<svg style="left:743.8px;top:11.5px;opacity:1" width="16.2" height="18.5" viewBox="0 0 16.2 18.5"><path fill="#326690" transform="scale(0.03616 0.03613)" d="M448 73.143v45.714C448 159.143 347.667 192 224 192S0 159.143 0 118.857V73.143C0 32.857 100.333 0 224 0s224 32.857 224 73.143zM448 176v102.857C448 319.143 347.667 352 224 352S0 319.143 0 278.857V176c48.125 33.143 136.208 48.572 224 48.572S399.874 209.143 448 176zm0 160v102.857C448 479.143 347.667 512 224 512S0 479.143 0 438.857V336c48.125 33.143 136.208 48.572 224 48.572S399.874 369.143 448 336z"/><path d="M9.8 10.1L17.8 14.8L9.8 19.5z" fill="#326690" stroke="#fff" stroke-width="1.6" stroke-linejoin="round" paint-order="stroke"/></svg>
<svg style="left:711.7px;top:57.1px;opacity:1" width="19.3" height="22" viewBox="0 0 19.3 22"><path fill="#222" transform="scale(0.04308 0.04297)" d="M448 73.143v45.714C448 159.143 347.667 192 224 192S0 159.143 0 118.857V73.143C0 32.857 100.333 0 224 0s224 32.857 224 73.143zM448 176v102.857C448 319.143 347.667 352 224 352S0 319.143 0 278.857V176c48.125 33.143 136.208 48.572 224 48.572S399.874 209.143 448 176zm0 160v102.857C448 479.143 347.667 512 224 512S0 479.143 0 438.857V336c48.125 33.143 136.208 48.572 224 48.572S399.874 369.143 448 336z"/><path d="M11.1 10.1L20.9 16.4L11.1 22.7z" fill="#222" stroke="#fff" stroke-width="1.8" stroke-linejoin="round" paint-order="stroke"/></svg>
<svg style="left:727px;top:105px;opacity:0.62" width="30" height="26" viewBox="0 0 30 26"><ellipse cx="10.7" cy="3.8" rx="10.7" ry="3.8" fill="#222"/><path d="M0 8.1A10.7 2.6 0 0 0 21.4 8.1V11.6A10.7 2.6 0 0 1 0 11.6z" fill="#222"/><path d="M0 13.7A10.7 2.6 0 0 0 21.4 13.7V17.2A10.7 2.6 0 0 1 0 17.2z" fill="#222"/><rect x="15" y="7.700" width="8" height="14" fill="#f5f6f9"/><circle cx="17.3" cy="16.3" r="8" fill="#f5f6f9"/><circle cx="17.3" cy="16.3" r="6.800" fill="#222"/><path d="M13.6 16.5l2.700 2.700l4.800 -5.200" fill="none" stroke="#fff" stroke-width="1.700" stroke-linecap="round" stroke-linejoin="round"/></svg>
<svg style="left:774.2px;top:105px;opacity:0.62" width="30" height="26" viewBox="0 0 30 26"><ellipse cx="10.7" cy="3.8" rx="10.7" ry="3.8" fill="#222"/><path d="M0 8.1A10.7 2.6 0 0 0 21.4 8.1V11.6A10.7 2.6 0 0 1 0 11.6z" fill="#222"/><path d="M0 13.7A10.7 2.6 0 0 0 21.4 13.7V17.2A10.7 2.6 0 0 1 0 17.2z" fill="#222"/><rect x="15" y="7.700" width="8" height="14" fill="#f5f6f9"/><circle cx="17.3" cy="16.3" r="8" fill="#f5f6f9"/><circle cx="17.3" cy="16.3" r="6.800" fill="#222"/><path d="M12.3 15.7l4.300 -4v2.500c3.300 .3 5.200 2.400 5.600 5.600c-1.400 -1.800 -3 -2.700 -5.600 -2.700v2.600z" fill="#fff"/></svg>
<svg style="left:242.1px;top:345.2px;opacity:0.62" width="18.3" height="20.8" viewBox="0 0 18.3 20.8"><path fill="#222" transform="scale(0.04085 0.04063)" d="M448 73.143v45.714C448 159.143 347.667 192 224 192S0 159.143 0 118.857V73.143C0 32.857 100.333 0 224 0s224 32.857 224 73.143zM448 176v102.857C448 319.143 347.667 352 224 352S0 319.143 0 278.857V176c48.125 33.143 136.208 48.572 224 48.572S399.874 209.143 448 176zm0 160v102.857C448 479.143 347.667 512 224 512S0 479.143 0 438.857V336c48.125 33.143 136.208 48.572 224 48.572S399.874 369.143 448 336z"/><rect x="7.7" y="9.7" width="13.300" height="13.900" fill="#f5f6f9"/><path d="M8.8 10.8h8.800l2.400 2.400v9.300h-11.200z" fill="#222"/><rect x="10.1" y="12.7" width="7" height="2.700" fill="#f5f6f9"/><circle cx="14" cy="18.9" r="1.600" fill="#f5f6f9"/></svg>
</div>
</body></html>
